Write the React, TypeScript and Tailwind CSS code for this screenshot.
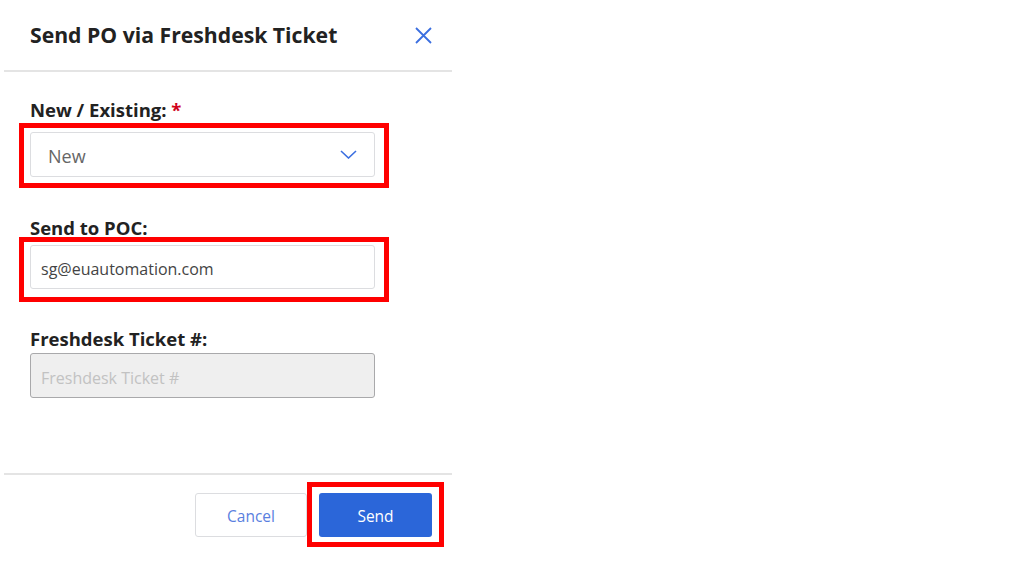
import React from "react";

const font = { fontFamily: '"Open Sans", "Noto Sans", sans-serif' };

function Hl({ className }: { className: string }) {
  return <span className={`pointer-events-none absolute border-[5px] border-[#ff0000] ${className}`} />;
}

export default function App() {
  return (
    <div className="w-[1024px] h-[565px] bg-white overflow-hidden" style={font}>
      <div className="ml-[4px] w-[448px] flex flex-col">
        <div className="h-[72px] flex items-center justify-between pl-[26px] pr-[19px] border-b-2 border-[#e4e4e4]">
          <h1 className="text-[21.2px] font-bold text-[#222]">Send PO via Freshdesk Ticket</h1>
          <button className="text-[#3b6fe0]">
            <svg width="19" height="19" viewBox="0 0 19 19" fill="none" stroke="currentColor" strokeWidth="1.8">
              <path d="M2 2 L17 17 M17 2 L2 17" />
            </svg>
          </button>
        </div>

        <div className="h-[401px] pl-[26px] pr-[77px] pt-[26px] flex flex-col">
          <label className="text-[18.5px] leading-[24px] font-bold text-[#222]">
            New / Existing: <span className="text-[#d0021b]">*</span>
          </label>
          <div className="relative mt-[10px]">
            <div className="h-[45px] rounded-[3px] border border-[#dcdde0] bg-white flex items-center justify-between pl-[17px] pr-[17px]">
              <span className="text-[18px] text-[#666] pt-[3px]">New</span>
              <svg width="17" height="9" viewBox="0 0 17 9" fill="none" stroke="#3b6fe0" strokeWidth="1.6">
                <path d="M1 1 L8.5 8 L16 1" />
              </svg>
            </div>
            <Hl className="-left-[11px] -top-[9px] -right-[14px] -bottom-[11px]" />
          </div>

          <label className="mt-[39px] text-[18.5px] leading-[24px] font-bold text-[#222]">Send to POC:</label>
          <div className="relative mt-[5px]">
            <input
              className="w-full h-[44px] rounded-[3px] border border-[#dcdde0] bg-white px-[10px] pt-[4px] text-[16px] text-[#444] outline-none"
              defaultValue="sg@euautomation.com"
            />
            <Hl className="-left-[11px] -top-[8px] -right-[14px] -bottom-[13px]" />
          </div>

          <label className="mt-[38px] text-[18.5px] leading-[24px] font-bold text-[#222]">Freshdesk Ticket #:</label>
          <input
            disabled
            className="mt-[2px] w-full h-[45px] rounded-[3px] border border-[#a9a9ab] bg-[#efefef] px-[10px] pt-[4px] text-[16px] placeholder:text-[#c2c2c2] outline-none"
            placeholder="Freshdesk Ticket #"
          />
        </div>

        <div className="border-t-2 border-[#e4e4e4] pt-[18px] pr-[20px] flex justify-end gap-[12px]">
          <button className="w-[112px] h-[44px] pt-[4px] rounded-[3px] border border-[#dcdde0] bg-white text-[15.5px] text-[#5a7fe0]">
            Cancel
          </button>
          <div className="relative">
            <button className="w-[113px] h-[44px] pt-[4px] rounded-[3px] bg-[#2b66d9] text-[15.5px] text-white">Send</button>
            <Hl className="-left-[12px] -top-[11px] -right-[12px] -bottom-[10px]" />
          </div>
        </div>
      </div>
    </div>
  );
}
